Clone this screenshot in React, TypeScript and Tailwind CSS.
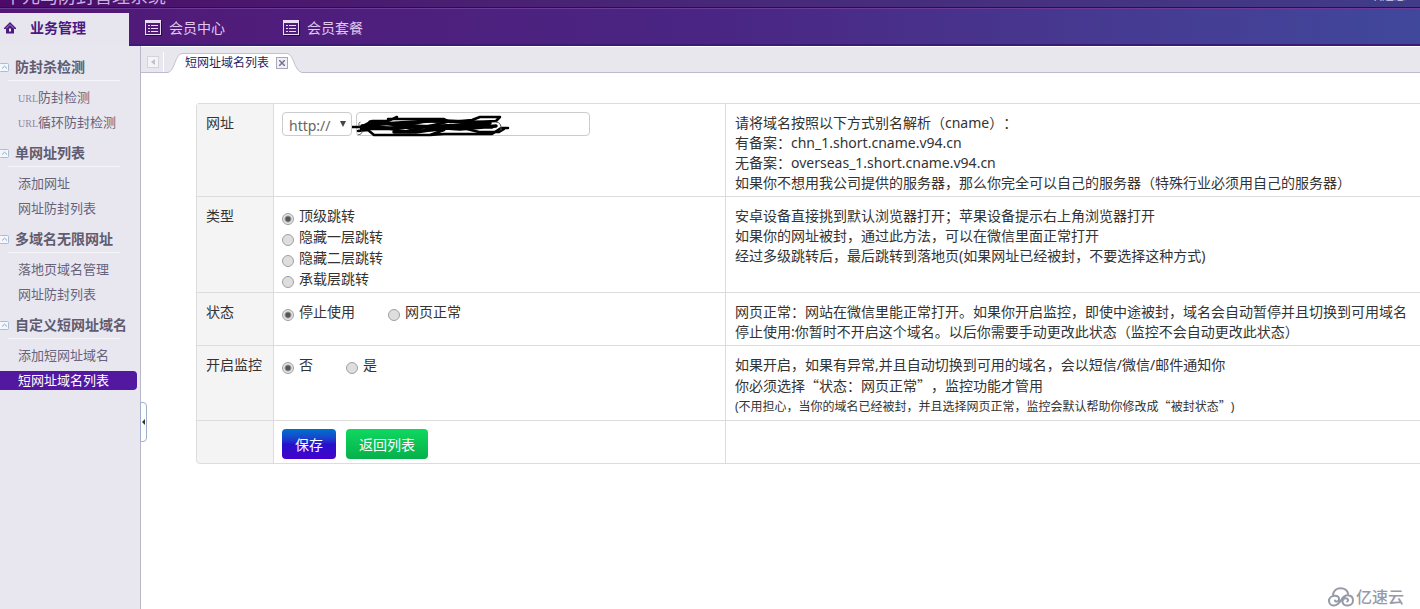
import React from "react";

const menu = [
  { title: "防封杀检测", items: ["URL防封检测", "URL循环防封检测"] },
  { title: "单网址列表", items: ["添加网址", "网址防封列表"] },
  { title: "多域名无限网址", items: ["落地页域名管理", "网址防封列表"] },
  { title: "自定义短网址域名", items: ["添加短网址域名", "短网址域名列表"] },
];

function ListIcon() {
  return (
    <svg width="17" height="16" viewBox="0 0 17 16" shapeRendering="crispEdges" aria-hidden="true">
      <path d="M1 15.500h15.500V1" fill="none" stroke="#2a0648" />
      <rect x="0.5" y="0.5" width="15" height="14" fill="none" stroke="#eadcf5" />
      <rect x="1" y="1" width="14" height="2" fill="#eadcf5" />
      <path d="M3 5h2v1H3zM6 5h7v1H6zM3 8h2v1H3zM6 8h7v1H6zM3 11h2v1H3zM6 11h7v1H6z" fill="#eadcf5" />
    </svg>
  );
}

function HomeIcon() {
  return (
    <svg width="12" height="12" viewBox="0 0 12 12" aria-hidden="true">
      <path d="M6 0L0 6v1h2v4.500h8V7h2V6z" fill="#4a1a80" />
      <path d="M2 6.500L6 2.500l4 4" fill="none" stroke="#b9a4d4" strokeWidth="0.8" />
      <path d="M5 6.500h2v3H5z" fill="#e7e6ee" />
    </svg>
  );
}

function Fold() {
  return (
    <svg width="9" height="9" viewBox="0 0 9 9" className="shrink-0" aria-hidden="true">
      <rect x="-0.5" y="0.5" width="9" height="8" rx="1" fill="#f3f6fb" stroke="#a9bdd6" />
      <path d="M2 5.500L4.500 3.200 7 5.500" fill="none" stroke="#8ba5c6" />
    </svg>
  );
}

function Radio({ name, label, checked }: { name: string; label: string; checked?: boolean }) {
  return (
    <label className="flex items-center gap-[5px]">
      <input
        type="radio"
        name={name}
        defaultChecked={checked}
        className="mt-1.5 h-3 w-3 appearance-none rounded-full border border-[#a0a0a0] bg-[#dedede] checked:bg-[radial-gradient(circle,#555_0,#555_2px,#e6e6e6_4px)]"
      />
      {label}
    </label>
  );
}

function Scribble() {
  return (
    <svg
      width="160"
      height="24"
      viewBox="0 0 160 24"
      className="pointer-events-none absolute top-0.5 -left-1"
      fill="none"
      stroke="#000"
      strokeLinecap="round"
      strokeLinejoin="round"
      aria-hidden="true"
    >
      <path d="M0 13h9l11-6 16 0 9-4M36 5h56l6 3 22-2 8-3h20l-4 4-22 1M156 14h-7l-9 6H92l-14 1M6 17l10-1 6 5h56l14-5" strokeWidth="2.500" />
      <path d="M10 12l20-2 48-3 16 0 44 2-24 2-76 3-26-1M18 8l30 3 60 4 36-3M42 18l22 0 40-6 36 1" strokeWidth="3.500" />
      <path d="M9 15l26 0 40-8 20 1-40 9 30-1 22-3 20 5h20l5-3M18 12l40 6" strokeWidth="2.500" />
      <path d="M8 8q-2 1-1 4M6 21q5-1 4-4M144 8q6 0 5 8" stroke="#555" />
    </svg>
  );
}

function Quoted({ children }: { children: string }) {
  return (
    <>
      <span lang="zh-CN" className="font-['Noto_Sans_CJK_SC']">“</span>
      {children}
      <span lang="zh-CN" className="font-['Noto_Sans_CJK_SC']">”</span>
    </>
  );
}

export default function App() {
  const th = "border-b border-[#dcdcdc] bg-[#f4f4f4] pt-[9px] pl-[9px] pb-[3px] font-normal";
  const field = "border-b border-l border-[#dcdcdc] pt-2 pl-2 pb-[3px]";
  const note = "border-b border-l border-[#dcdcdc] pt-[9px] pl-[9px] pb-[3px]";
  return (
    <div
      lang="zh-CN"
      className="flex min-h-screen flex-col overflow-hidden bg-white font-['Noto_Sans','Noto_Sans_CJK_SC',sans-serif] [text-spacing-trim:space-all]"
    >
      <header>
        <div className="flex h-2 items-end justify-between overflow-hidden border-b border-[#34075a] bg-linear-to-r from-[#4b0a68] to-[#403c88] pr-3.5 pl-1">
          <h1 className="text-lg leading-[22px] text-[#c9aee0]">千元马防封管理系统</h1>
          <span className="text-xs leading-[22px] text-[#d5d0f0]">欢迎您</span>
        </div>
        <div className="flex h-[38px] items-end border-t border-b-2 border-t-[#6b3b96] border-b-[#3b1a78] bg-linear-to-r from-[#521776] via-[#4a2583] to-[#40489c]">
          <div className="-mb-0.5 flex h-[33px] w-[129px] items-center gap-3.5 bg-[#e7e6ee] pb-[3px] pl-1 text-sm font-bold text-[#4a1a80]">
            <HomeIcon />
            <span>业务管理</span>
          </div>
          <nav className="flex h-full items-center gap-[58px] pt-0.5 pl-4 text-sm text-[#e0c8f0]">
            <a href="#center" className="flex items-center gap-[7px]"><ListIcon />会员中心</a>
            <a href="#plan" className="flex items-center gap-[7px]"><ListIcon />会员套餐</a>
          </nav>
        </div>
      </header>
      <div className="flex flex-1">
        <aside className="w-[141px] shrink-0 border-r border-[#b9b7cc] bg-[#e8e7ef] pt-2">
          {menu.map((g, i) => (
            <section key={g.title} className="h-[86px]">
              <h2 className="flex h-[26px] items-center gap-1.5 text-sm font-bold whitespace-nowrap text-[#5f5b70]">
                <Fold />
                {g.title}
              </h2>
              <hr className="mr-5 ml-2 border-[#f6f6fa]" />
              <ul className="pt-[7px] text-[13px] text-[#67637c]">
                {g.items.map((t, j) => (
                  <li key={t} className="mb-1.5 h-[19px]">
                    <a
                      href="#item"
                      className={
                        i === 3 && j === 1
                          ? "mr-[3px] block rounded-r-sm bg-[#5218a0] pl-[18px] leading-[19px] text-white"
                          : "block pl-[18px] leading-[19px]"
                      }
                    >
                      {t.startsWith("URL") ? (
                        <><span className="font-['Liberation_Serif',serif] text-[10px] text-[#8d8a9f]">URL</span>{t.slice(3)}</>
                      ) : t}
                    </a>
                  </li>
                ))}
              </ul>
            </section>
          ))}
        </aside>
        <div className="relative min-w-0 flex-1">
          <button
            aria-label="收起菜单"
            className="absolute top-[356px] -left-px flex h-10 w-[7px] items-center justify-center rounded-r-sm border border-[#9fb0cc] bg-white"
          >
            <svg width="3" height="6" viewBox="0 0 3 6" aria-hidden="true"><path d="M3 0L0 3l3 3z" fill="#333" /></svg>
          </button>
          <div className="flex h-[27px] items-end border-t border-b border-t-white border-b-[#bdbbd0] bg-[#e8e7ed]">
            <div className="flex h-5 items-center gap-1 pl-1.5">
              <button aria-label="上一个" className="flex h-3 w-3 items-center justify-center border border-[#d4d3da] bg-[#f4f4f6]">
                <svg width="4" height="6" viewBox="0 0 4 6" aria-hidden="true"><path d="M4 0L0 3l4 3z" fill="#c0c0c8" /></svg>
              </button>
              <span className="h-full w-px bg-white" />
            </div>
            <div className="relative -mb-px ml-1 flex h-5 w-[134px] items-center">
              <svg width="134" height="20" viewBox="0 0 134 20" className="absolute inset-0" aria-hidden="true">
                <path d="M0 19.500C7 18 7 1 14 0.500H119C126 1 126 18 134 19.500V20H0z" fill="#fff" />
                <path d="M0 19.500C7 18 7 1 14 0.500H119C126 1 126 18 134 19.500" fill="none" stroke="#c3c1d3" />
              </svg>
              <span className="relative pl-[17px] text-xs whitespace-nowrap text-[#2d1b60]">短网址域名列表</span>
              <button aria-label="关闭" className="relative ml-[7px] flex h-3 w-3 items-center justify-center border border-[#aaa7bd] bg-[#f0eff5]">
                <svg width="6" height="6" viewBox="0 0 6 6" aria-hidden="true"><path d="M0 0l6 6M6 0L0 6" stroke="#77738e" strokeWidth="1.500" /></svg>
              </button>
            </div>
          </div>
          <main className="pt-[30px] pl-[55px]">
            <table className="w-full table-fixed border-separate border-spacing-0 rounded-l border-t border-l border-[#dcdcdc] text-left text-sm leading-5 text-[#333]">
              <colgroup>
                <col className="w-[76px]" />
                <col className="w-[452px]" />
                <col />
              </colgroup>
              <tbody className="align-top whitespace-nowrap">
                <tr>
                  <th scope="row" className={th}><label htmlFor="host">网址</label></th>
                  <td className={field}>
                    <div className="flex gap-1">
                      <span className="relative">
                        <select aria-label="协议" className="h-6 w-[70px] appearance-none rounded-sm border border-[#ccc] bg-white pt-[3px] pl-1.5 text-sm leading-5 text-[#666]">
                          <option>http://</option>
                        </select>
                        <svg width="6" height="6" viewBox="0 0 6 6" className="pointer-events-none absolute top-[9px] right-1.5" aria-hidden="true"><path d="M0 0h6L3 6z" fill="#444" /></svg>
                      </span>
                      <span className="relative">
                        <input id="host" className="h-6 w-[234px] rounded-sm border border-[#ccc] bg-white px-1.5" />
                        <Scribble />
                      </span>
                    </div>
                  </td>
                  <td className={note}>
                    请将域名按照以下方式别名解析（cname）：<br />
                    有备案：chn_1.short.cname.v94.cn<br />
                    无备案：overseas_1.short.cname.v94.cn<br />
                    如果你不想用我公司提供的服务器，那么你完全可以自己的服务器（特殊行业必须用自己的服务器）
                  </td>
                </tr>
                <tr>
                  <th scope="row" className={th}>类型</th>
                  <td className={field}>
                    <div className="leading-[21px]">
                      <Radio name="type" label="顶级跳转" checked />
                      <Radio name="type" label="隐藏一层跳转" />
                      <Radio name="type" label="隐藏二层跳转" />
                      <Radio name="type" label="承载层跳转" />
                    </div>
                  </td>
                  <td className={note}>
                    安卓设备直接挑到默认浏览器打开；苹果设备提示右上角浏览器打开<br />
                    如果你的网址被封，通过此方法，可以在微信里面正常打开<br />
                    经过多级跳转后，最后跳转到落地页(如果网址已经被封，不要选择这种方式)
                  </td>
                </tr>
                <tr>
                  <th scope="row" className={th}>状态</th>
                  <td className={field}>
                    <div className="flex gap-[33px] leading-[21px]">
                      <Radio name="state" label="停止使用" checked />
                      <Radio name="state" label="网页正常" />
                    </div>
                  </td>
                  <td className={note}>
                    网页正常：网站在微信里能正常打开。如果你开启监控，即使中途被封，域名会自动暂停并且切换到可用域名<br />
                    停止使用:你暂时不开启这个域名。以后你需要手动更改此状态（监控不会自动更改此状态）
                  </td>
                </tr>
                <tr>
                  <th scope="row" className={th}>开启监控</th>
                  <td className={field}>
                    <div className="flex gap-[33px] leading-[21px]">
                      <Radio name="watch" label="否" checked />
                      <Radio name="watch" label="是" />
                    </div>
                  </td>
                  <td className={note}>
                    如果开启，如果有异常,并且自动切换到可用的域名，会以短信/微信/邮件通知你<br />
                    你必须选择<Quoted>状态：网页正常</Quoted>，监控功能才管用<br />
                    <small className="text-xs leading-5">(不用担心，当你的域名已经被封，并且选择网页正常，监控会默认帮助你修改成<Quoted>被封状态</Quoted>)</small>
                  </td>
                </tr>
                <tr>
                  <th className={th + " rounded-bl"}></th>
                  <td className={field}>
                    <div className="flex gap-2.5 pb-px text-white">
                      <button className="h-[30px] rounded-sm bg-linear-to-b from-[#0070cc] via-[#2410cc] to-[#4400cc] px-[13px] pt-px">保存</button>
                      <button className="h-[30px] rounded-sm bg-linear-to-b from-[#0fd860] to-[#06b04b] px-[13px] pt-px">返回列表</button>
                    </div>
                  </td>
                  <td className={note}></td>
                </tr>
              </tbody>
            </table>
          </main>
          <div className="absolute right-4 bottom-0 flex items-center gap-0.5 text-base font-medium text-[#969aa8]">
            <svg width="26" height="20" viewBox="0 0 26 20" fill="none" stroke="#969aa8" strokeWidth="2" strokeLinecap="round" aria-hidden="true">
              <path d="M5 8C5.500 4 8.500 1.200 12.500 1.200c4 0 7 2.300 7.700 5.800" />
              <path d="M7 13.500c0 1.500 3.500 1.500 4-.8.500-2.500-1.500-4-4-4-3.500 0-6 2.300-6 5.200 0 2.800 2.300 4.600 5 4.600 5.500 0 6.500-5.500 9.500-8.500 1.500-1.500 3-2 4.500-1.800 3 .3 5 2.500 5 5.300 0 3-2.300 5-5.200 5-3.300 0-5.300-1.500-5.300-4 0-2 1.500-3.300 3.200-3.300 2.300 0 3.300 2.300 1.500 3.300" />
            </svg>
            亿速云
          </div>
        </div>
      </div>
    </div>
  );
}
